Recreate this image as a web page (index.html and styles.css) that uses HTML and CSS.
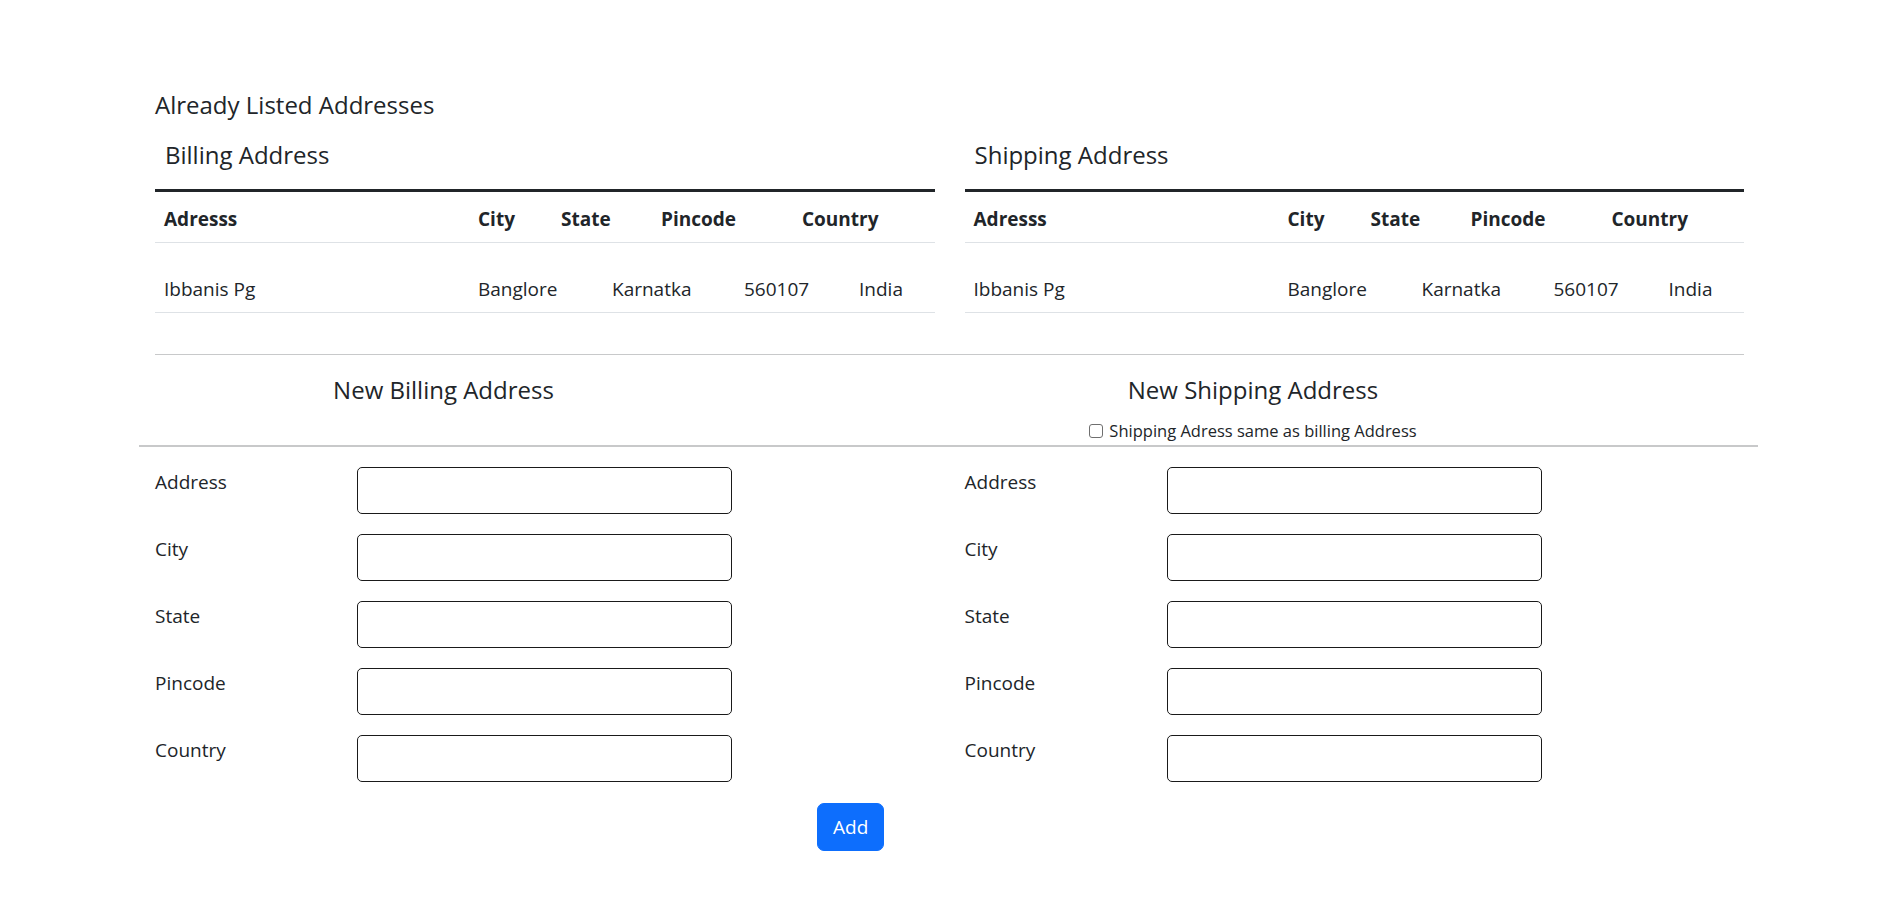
FILE: index.html
```html
<!DOCTYPE html>
<html lang="en">
<head>
<meta charset="utf-8">
<title>Addresses</title>
<link rel="stylesheet" href="styles.css">
</head>
<body>
<div class="page">
  <h5 class="title">Already Listed Addresses</h5>

  <div class="cols">
    <section class="col">
      <div class="caption"><h5 class="caption-title">Billing Address</h5></div>
      <div class="trow head-row">
        <div class="cell">Adresss</div>
        <div class="cell">City</div>
        <div class="cell">State</div>
        <div class="cell">Pincode</div>
        <div class="cell">Country</div>
      </div>
      <div class="trow body-row">
        <div class="cell">Ibbanis Pg</div>
        <div class="cell">Banglore</div>
        <div class="cell">Karnatka</div>
        <div class="cell">560107</div>
        <div class="cell">India</div>
      </div>
    </section>
    <section class="col">
      <div class="caption"><h5 class="caption-title">Shipping Address</h5></div>
      <div class="trow head-row">
        <div class="cell">Adresss</div>
        <div class="cell">City</div>
        <div class="cell">State</div>
        <div class="cell">Pincode</div>
        <div class="cell">Country</div>
      </div>
      <div class="trow body-row">
        <div class="cell">Ibbanis Pg</div>
        <div class="cell">Banglore</div>
        <div class="cell">Karnatka</div>
        <div class="cell">560107</div>
        <div class="cell">India</div>
      </div>
    </section>
  </div>

  <hr class="rule">

  <div class="cols">
    <div class="col">
      <div class="form-head">
        <h5 class="form-title">New Billing Address</h5>
      </div>
    </div>
    <div class="col">
      <div class="form-head">
        <h5 class="form-title">New Shipping Address</h5>
        <label class="same"><input type="checkbox" class="check"> Shipping Adress same as billing Address</label>
      </div>
    </div>
  </div>

  <hr class="rule-wide">

  <div class="cols">
    <div class="col">
      <div class="form-grid">
        <label class="flabel" for="b-address">Address</label><input class="finput" id="b-address" type="text">
        <label class="flabel" for="b-city">City</label><input class="finput" id="b-city" type="text">
        <label class="flabel" for="b-state">State</label><input class="finput" id="b-state" type="text">
        <label class="flabel" for="b-pin">Pincode</label><input class="finput" id="b-pin" type="text">
        <label class="flabel" for="b-country">Country</label><input class="finput" id="b-country" type="text">
      </div>
    </div>
    <div class="col">
      <div class="form-grid">
        <label class="flabel" for="s-address">Address</label><input class="finput" id="s-address" type="text">
        <label class="flabel" for="s-city">City</label><input class="finput" id="s-city" type="text">
        <label class="flabel" for="s-state">State</label><input class="finput" id="s-state" type="text">
        <label class="flabel" for="s-pin">Pincode</label><input class="finput" id="s-pin" type="text">
        <label class="flabel" for="s-country">Country</label><input class="finput" id="s-country" type="text">
      </div>
    </div>
  </div>

  <div class="actions"><button class="btn" type="button">Add</button></div>
</div>
</body>
</html>
```

FILE: styles.css
```css
* { box-sizing: border-box; }

html, body {
  margin: 0;
  padding: 0;
  background: #ffffff;
}

body {
  font-family: "Open Sans", "Noto Sans", "Liberation Sans", sans-serif;
  font-size: 19px;
  line-height: 30px;
  color: #212529;
}

.page {
  margin-left: 139px;
  width: 1621px;
  padding-top: 90px;
  padding-bottom: 40px;
}

.title {
  margin: 0 0 10px;
  padding: 0 16px;
  font-size: 24px;
  font-weight: 400;
  line-height: 30px;
}

.cols {
  display: flex;
  gap: 30px;
  padding: 0 16px;
}

.col {
  flex: 1 1 0;
  min-width: 0;
}

.caption {
  padding: 10px 10px 19px;
}

.caption-title {
  margin: 0;
  font-size: 24px;
  font-weight: 400;
  line-height: 30px;
}

.trow {
  display: grid;
  border-bottom: 1px solid #dee2e6;
}

.head-row {
  grid-template-columns: 314px 83px 100px 141px 1fr;
  border-top: 3px solid #212529;
  padding: 12px 0 8px;
  font-weight: 700;
}

.body-row {
  grid-template-columns: 314px 134px 132px 115px 1fr;
  padding: 31px 0 8px;
}

.cell {
  padding-left: 9px;
  white-space: nowrap;
}

.rule {
  margin: 41px 16px 20px;
  border: 0;
  border-top: 1px solid #c8c9ca;
  height: 0;
}

.form-head {
  width: 577px;
  text-align: center;
}

.form-title {
  margin: 0 0 13px;
  font-size: 24px;
  font-weight: 400;
  line-height: 30px;
}

.same {
  display: flex;
  align-items: center;
  justify-content: center;
  gap: 6px;
  font-size: 16.5px;
  line-height: 26px;
}

.check {
  -webkit-appearance: none;
  appearance: none;
  width: 14px;
  height: 14px;
  margin: 0;
  border: 1px solid #6f6f6f;
  border-radius: 3px;
  background: #ffffff;
}

.rule-wide {
  margin: 1px 2px 20px 0;
  border: 0;
  border-top: 2px solid #c8c9ca;
  height: 0;
}

.form-grid {
  display: grid;
  grid-template-columns: 202px 375px;
  row-gap: 20px;
}

.flabel {
  padding-top: 0;
  line-height: 30px;
}

.finput {
  height: 47px;
  width: 375px;
  margin: 0;
  padding: 0 12px;
  border: 1px solid #1a1a1a;
  border-radius: 5px;
  font: inherit;
  background: #ffffff;
}

.actions {
  margin-top: 21px;
  padding-left: 678px;
}

.btn {
  height: 48px;
  padding: 0 15px;
  border: 1px solid #0d6efd;
  border-radius: 7px;
  background: #0d6efd;
  color: #ffffff;
  font-family: inherit;
  font-size: 19px;
  line-height: 46px;
}
```
